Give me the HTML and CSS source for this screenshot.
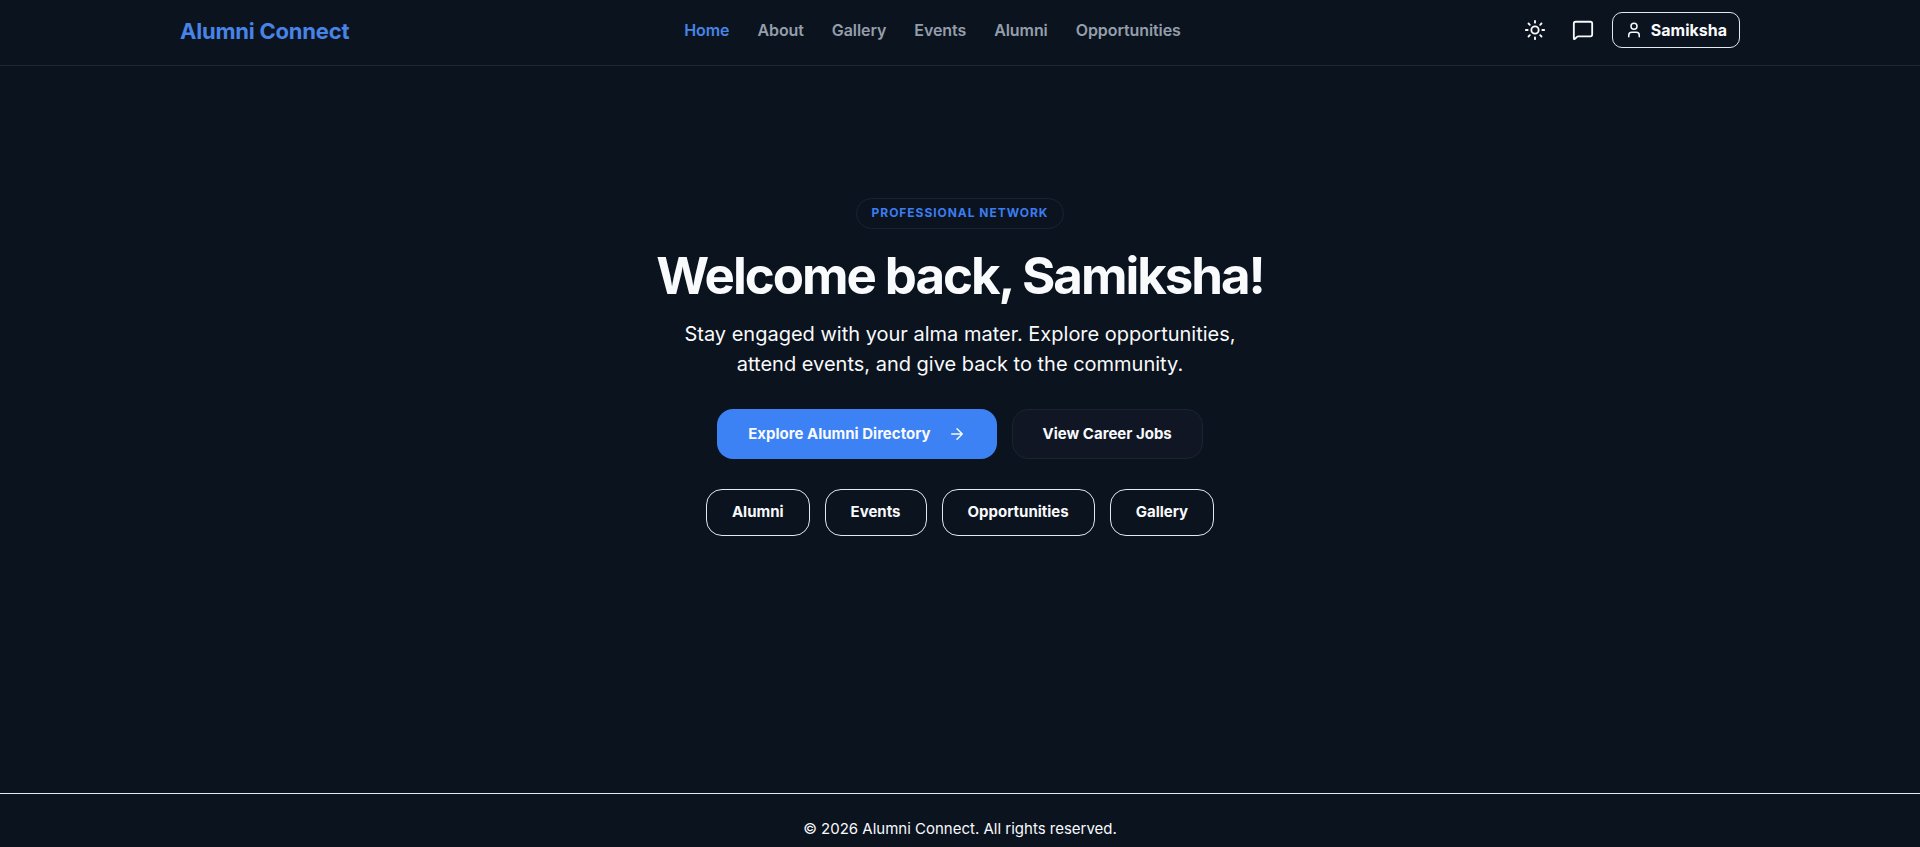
FILE: index.html
```html
<!DOCTYPE html>
<html lang="en">
<head>
<meta charset="utf-8">
<meta name="viewport" content="width=device-width, initial-scale=1">
<title>Alumni Connect</title>
<link rel="stylesheet" href="styles.css">
</head>
<body>
<header class="site-header">
  <div class="header-inner">
    <a class="brand" href="#">Alumni Connect</a>
    <nav class="nav" aria-label="Main">
      <a class="nav-link active" href="#" aria-current="page">Home</a>
      <a class="nav-link" href="#">About</a>
      <a class="nav-link" href="#">Gallery</a>
      <a class="nav-link" href="#">Events</a>
      <a class="nav-link" href="#">Alumni</a>
      <a class="nav-link" href="#">Opportunities</a>
    </nav>
    <div class="actions">
      <button class="icon-button" type="button" aria-label="Toggle theme">
        <svg class="icon-large" viewBox="0 0 24 24"><circle cx="12" cy="12" r="4"/><path d="M12 2v2M12 20v2M4.93 4.93l1.41 1.41M17.66 17.66l1.41 1.41M2 12h2M20 12h2M6.34 17.66l-1.41 1.41M19.07 4.93l-1.41 1.41"/></svg>
      </button>
      <button class="icon-button" type="button" aria-label="Messages">
        <svg class="icon-large" viewBox="0 0 24 24"><path d="M22 17a2 2 0 0 1-2 2H6.828a2 2 0 0 0-1.414.586l-2.202 2.202A.71.71 0 0 1 2 21.286V5a2 2 0 0 1 2-2h16a2 2 0 0 1 2 2z"/></svg>
      </button>
      <button class="user-button" type="button">
        <svg class="icon-small" viewBox="0 0 24 24"><path d="M19 21v-2a4 4 0 0 0-4-4H9a4 4 0 0 0-4 4v2"/><circle cx="12" cy="7" r="4"/></svg>
        Samiksha
      </button>
    </div>
  </div>
</header>
<main class="hero">
  <span class="tag">PROFESSIONAL NETWORK</span>
  <h1 class="title">Welcome back, Samiksha!</h1>
  <p class="lead">Stay engaged with your alma mater. Explore opportunities, attend events, and give back to the community.</p>
  <div class="row">
    <a class="button primary" href="#">Explore Alumni Directory
      <svg class="icon-small" viewBox="0 0 24 24"><path d="M5 12h14M12 5l7 7-7 7"/></svg>
    </a>
    <a class="button secondary" href="#">View Career Jobs</a>
  </div>
  <div class="row shortcuts">
    <a class="button outline" href="#">Alumni</a>
    <a class="button outline" href="#">Events</a>
    <a class="button outline" href="#">Opportunities</a>
    <a class="button outline" href="#">Gallery</a>
  </div>
</main>
<footer class="site-footer">© 2026 Alumni Connect. All rights reserved.</footer>
</body>
</html>
```
FILE: styles.css
```css
* {
  box-sizing: border-box;
}

body {
  margin: 0;
  min-height: 100vh;
  display: flex;
  flex-direction: column;
  background: #0b131f;
  color: #f8fafc;
  font-family: Inter, "Liberation Sans", sans-serif;
}

a {
  color: inherit;
  text-decoration: none;
}

button {
  font: inherit;
  color: inherit;
  background: none;
  border: 0;
  padding: 0;
  cursor: pointer;
}

svg {
  fill: none;
  stroke: currentColor;
  stroke-width: 2;
  stroke-linecap: round;
  stroke-linejoin: round;
}

.icon-large {
  width: 22px;
  height: 22px;
}

.icon-small {
  width: 18px;
  height: 18px;
}

.site-header {
  padding: 12px 24px 17px;
  border-bottom: 1px solid #1c2733;
}

.header-inner {
  max-width: 1560px;
  margin: 0 auto;
  display: flex;
  align-items: center;
  justify-content: space-between;
}

.brand {
  padding-top: 2px;
  font-size: 22px;
  font-weight: 700;
  letter-spacing: -0.01em;
  color: #4784e6;
}

.nav {
  display: flex;
  gap: 28px;
}

.nav-link {
  font-size: 16px;
  font-weight: 600;
  letter-spacing: -0.005em;
  color: #949eab;
}

.nav-link.active {
  color: #4784e6;
}

.actions {
  display: flex;
  align-items: center;
  gap: 10px;
}

.icon-button {
  width: 38px;
  height: 36px;
  display: grid;
  place-items: center;
}

.user-button {
  height: 36px;
  padding: 0 12px;
  display: flex;
  align-items: center;
  gap: 8px;
  border: 1px solid #e2e8f0;
  border-radius: 10px;
  font-size: 16px;
  font-weight: 700;
}

.hero {
  flex: 1;
  padding: 132px 24px 0;
  display: flex;
  flex-direction: column;
  align-items: center;
  text-align: center;
}

.tag {
  padding: 6px 15px 8px;
  border: 1px solid #182338;
  border-radius: 16px;
  font-size: 12px;
  line-height: 15px;
  font-weight: 700;
  letter-spacing: 0.08em;
  color: #3b7df0;
}

.title {
  margin: 19px 0 0;
  font-size: 51px;
  line-height: 56px;
  font-weight: 700;
  letter-spacing: -0.04em;
}

.lead {
  max-width: 600px;
  margin: 15px 0 0;
  font-size: 20px;
  line-height: 30px;
}

.row {
  margin-top: 30px;
  display: flex;
  flex-wrap: wrap;
  justify-content: center;
  gap: 15px;
}

.button {
  display: flex;
  align-items: center;
  border: 1px solid transparent;
  border-radius: 16px;
  font-size: 15px;
  line-height: 18px;
  font-weight: 700;
}

.primary {
  gap: 17px;
  padding: 15px 30px;
  background: #3c82f4;
}

.secondary {
  padding: 15px 30px;
  background: #101624;
  border-color: #1a2431;
}

.outline {
  padding: 13px 25px 14px;
  border-color: #e2e8f0;
}

.site-footer {
  padding: 25px 24px 9px;
  border-top: 1px solid #e2e8f0;
  text-align: center;
  font-size: 15px;
  line-height: 19px;
}
```
